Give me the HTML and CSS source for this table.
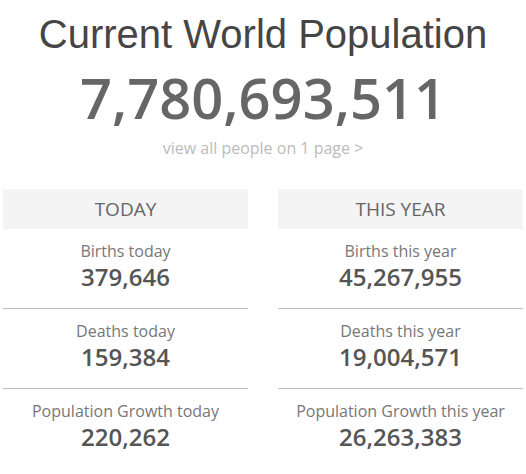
FILE: index.html
```html
<!DOCTYPE html>
<html lang="en">
<head>
    <meta charset="UTF-8">
    <meta name="viewport" content="width=device-width, initial-scale=1.0">
    <title>Current World Population</title>
    <link rel="stylesheet" href="styles.css">
</head>
<body>
    <!-- Main counter -->
    <h1 class="title">Current World Population</h1>
    <div class="counter">7,780,693,511</div>
    <a class="all-people" href="#">view all people on 1 page &gt;</a>

    <!-- Today / this year -->
    <div class="stats">
        <div class="panel">
            <div class="panel-head">TODAY</div>
            <div class="stat">
                <div class="stat-label">Births today</div>
                <div class="stat-value">379,646</div>
            </div>
            <div class="stat">
                <div class="stat-label">Deaths today</div>
                <div class="stat-value">159,384</div>
            </div>
            <div class="stat">
                <div class="stat-label">Population Growth today</div>
                <div class="stat-value">220,262</div>
            </div>
        </div>
        <div class="panel">
            <div class="panel-head">THIS YEAR</div>
            <div class="stat">
                <div class="stat-label">Births this year</div>
                <div class="stat-value">45,267,955</div>
            </div>
            <div class="stat">
                <div class="stat-label">Deaths this year</div>
                <div class="stat-value">19,004,571</div>
            </div>
            <div class="stat">
                <div class="stat-label">Population Growth this year</div>
                <div class="stat-value">26,263,383</div>
            </div>
        </div>
    </div>
</body>
</html>
```

FILE: styles.css
```css
* {
    box-sizing: border-box;
    margin: 0;
    padding: 0;
}
body {
    padding: 10px 3px 0;
    background-color: #fff;
    font-family: "Open Sans", Arial, sans-serif;
    text-align: center;
}
.title {
    font-family: "Liberation Sans", Arial, sans-serif;
    font-size: 40px;
    font-weight: normal;
    line-height: 48px;
    color: #454545;
}
.counter {
    margin-top: 4px;
    font-size: 56px;
    font-weight: 600;
    line-height: 70px;
    color: #666;
}
.all-people {
    display: block;
    margin-top: 6px;
    font-size: 16px;
    line-height: 20px;
    color: #bbb;
    text-decoration: none;
}
.stats {
    display: grid;
    grid-template-columns: 1fr 1fr;
    gap: 30px;
    margin-top: 31px;
}
.panel-head {
    height: 40px;
    line-height: 40px;
    background-color: #f4f4f4;
    font-size: 19px;
    color: #666;
}
.stat {
    padding: 11px 0 16px;
    border-bottom: 1px solid #bbb;
}
.stat:last-child {
    border-bottom: none;
}
.stat-label {
    font-size: 16px;
    line-height: 22px;
    color: #777;
}
.stat-value {
    font-size: 24px;
    font-weight: 600;
    line-height: 30px;
    color: #555;
}
```
